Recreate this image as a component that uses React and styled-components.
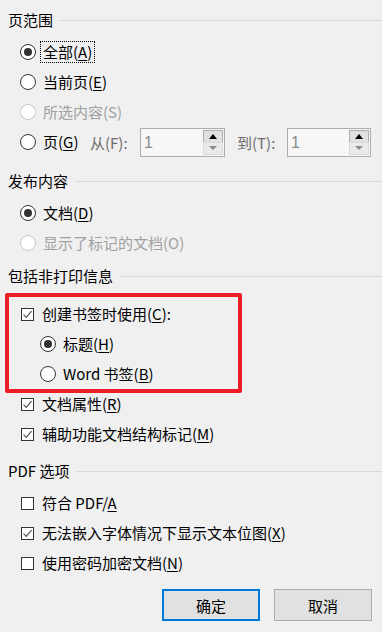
import React from 'react';
import styled, { createGlobalStyle, css } from 'styled-components';

const GlobalStyle = createGlobalStyle`
  html, body {
    margin: 0;
    padding: 0;
    background: #f0f0f0;
  }
  body {
    font-family: "Noto Sans CJK SC", "Noto Sans", sans-serif;
    font-size: 15px;
    color: #000;
  }
`

const Dialog = styled.div`
  width: 382px;
  height: 632px;
  padding: 9px 0 0 8px;
  box-sizing: border-box;
  overflow: hidden;
  display: flex;
  flex-direction: column;
`

const Section = styled.div`
  display: flex;
  flex-direction: column;
  margin-bottom: ${p => p.mb || 0}px;
`

const Heading = styled.div`
  display: flex;
  align-items: center;
  height: 22px;
  line-height: 22px;
  margin-bottom: 6px;
  white-space: nowrap;

  &::after {
    content: '';
    flex: 1;
    height: 1px;
    background: #d9d9d9;
    margin-left: 7px;
  }
`

const Row = styled.div`
  display: flex;
  align-items: center;
  height: 30px;
  padding-left: ${p => (p.indent ? 32 : 12)}px;
  color: ${p => (p.disabled ? '#a0a0a0' : '#000')};
  white-space: nowrap;
`

const Label = styled.span`
  line-height: 20px;
  padding: 0 2px;
  margin-left: 4px;
  border: 1px dotted ${p => (p.focused ? '#000' : 'transparent')};
  ${p => p.width && css`width: ${p.width}px;`}
`

const Key = styled.u`
  text-underline-offset: 2px;
`

const RadioCircle = styled.span`
  width: 14px;
  height: 14px;
  border: 1px solid ${p => (p.disabled ? '#c8c8c8' : '#333')};
  border-radius: 50%;
  background: #fff;
  display: flex;
  align-items: center;
  justify-content: center;
  flex: none;

  &::after {
    content: '';
    display: ${p => (p.checked ? 'block' : 'none')};
    width: 8px;
    height: 8px;
    border-radius: 50%;
    background: #333;
  }
`

const CheckBox = styled.span`
  width: 11px;
  height: 11px;
  margin: 0 1px;
  border: 1px solid #333;
  background: #fff;
  display: flex;
  align-items: center;
  justify-content: center;
  flex: none;
`

const Field = styled.span`
  color: #6d6d6d;
  width: ${p => p.width}px;
`

const Spin = styled.div`
  display: flex;
  align-items: stretch;
  width: ${p => p.width}px;
  height: 29px;
  box-sizing: border-box;
  border: 1px solid #adadad;
  background: #f7f7f7;
  margin-right: ${p => p.mr || 0}px;
`

const SpinValue = styled.span`
  flex: 1;
  color: #8a8a8a;
  font-family: "Liberation Sans", "Noto Sans", sans-serif;
  font-size: 16px;
  line-height: 27px;
  padding-left: 3px;
`

const SpinButtons = styled.div`
  display: flex;
  flex-direction: column;
  width: 20px;
  padding: 1px 1px 1px 0;
`

const SpinButton = styled.div`
  flex: 1;
  display: flex;
  align-items: center;
  justify-content: center;
  border: 1px solid ${p => (p.up ? '#adadad' : '#dadada')};
  background: ${p => (p.up ? '#e1e1e1' : '#eaeaea')};
  margin-top: ${p => (p.up ? 0 : -1)}px;

  &::after {
    content: '';
    border-left: 4px solid transparent;
    border-right: 4px solid transparent;
    ${p => p.up
      ? css`border-bottom: 5px solid #000;`
      : css`border-top: 4px solid #8a8a8a;`}
  }
`

const Highlight = styled.div`
  position: relative;
  display: flex;
  flex-direction: column;
  padding-top: 6px;

  &::after {
    content: '';
    position: absolute;
    left: -3px;
    top: 0;
    width: 237px;
    height: 100px;
    box-sizing: border-box;
    border: 4px solid #ee1c25;
    border-radius: 2px;
    pointer-events: none;
  }
`

const Footer = styled.div`
  display: flex;
  justify-content: flex-end;
  gap: 14px;
  padding-right: 10px;
  margin-top: 11px;
`

const Button = styled.button`
  width: 98px;
  height: 32px;
  box-sizing: border-box;
  font-family: inherit;
  font-size: 15px;
  color: #000;
  background: #e1e1e1;
  border: ${p => (p.primary ? '2px solid #0078d7' : '1px solid #adadad')};
  padding: 0;
`

const Check = () => (
  <CheckBox>
    <svg width="11" height="11" viewBox="0 0 11 11">
      <polyline points="1.5,5.5 4.2,8.4 9.6,2.2" fill="none" stroke="#4a4a4a" strokeWidth="1.1" />
    </svg>
  </CheckBox>
)

const Radio = ({ checked, disabled, indent, focused, children }) => (
  <Row indent={indent} disabled={disabled}>
    <RadioCircle checked={checked} disabled={disabled} />
    <Label focused={focused}>{children}</Label>
  </Row>
)

const CheckRow = ({ checked, children }) => (
  <Row>
    {checked ? <Check /> : <CheckBox />}
    <Label>{children}</Label>
  </Row>
)

const SpinBox = ({ width, mr }) => (
  <Spin width={width} mr={mr}>
    <SpinValue>1</SpinValue>
    <SpinButtons>
      <SpinButton up />
      <SpinButton />
    </SpinButtons>
  </Spin>
)

export default function App() {
  return (
    <>
      <GlobalStyle />
      <Dialog>
        <Section mb={13}>
          <Heading>页范围</Heading>
          <Radio checked focused>全部(<Key>A</Key>)</Radio>
          <Radio>当前页(<Key>E</Key>)</Radio>
          <Radio disabled>所选内容(S)</Radio>
          <Row>
            <RadioCircle />
            <Label width={44}>页(<Key>G</Key>)</Label>
            <Field width={50}>从(F):</Field>
            <SpinBox width={85} mr={12} />
            <Field width={50}>到(T):</Field>
            <SpinBox width={84} />
          </Row>
        </Section>

        <Section mb={7}>
          <Heading>发布内容</Heading>
          <Radio checked>文档(<Key>D</Key>)</Radio>
          <Radio disabled>显示了标记的文档(O)</Radio>
        </Section>

        <Section mb={11}>
          <Heading>包括非打印信息</Heading>
          <Highlight>
            <CheckRow checked>创建书签时使用(<Key>C</Key>):</CheckRow>
            <Radio checked indent>标题(<Key>H</Key>)</Radio>
            <Radio indent>Word 书签(<Key>B</Key>)</Radio>
          </Highlight>
          <CheckRow checked>文档属性(<Key>R</Key>)</CheckRow>
          <CheckRow checked>辅助功能文档结构标记(<Key>M</Key>)</CheckRow>
        </Section>

        <Section>
          <Heading>PDF 选项</Heading>
          <CheckRow>符合 PDF/<Key>A</Key></CheckRow>
          <CheckRow checked>无法嵌入字体情况下显示文本位图(<Key>X</Key>)</CheckRow>
          <CheckRow>使用密码加密文档(<Key>N</Key>)</CheckRow>
        </Section>

        <Footer>
          <Button primary>确定</Button>
          <Button>取消</Button>
        </Footer>
      </Dialog>
    </>
  );
}
